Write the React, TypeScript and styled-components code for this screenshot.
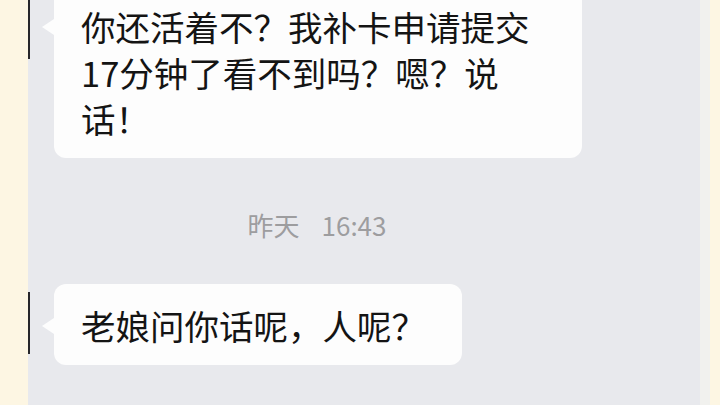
import React from "react";
import styled, { createGlobalStyle } from "styled-components";

const GlobalStyle = createGlobalStyle`
  html, body {
    margin: 0;
    padding: 0;
    background: #fdf6e3;
  }
  body {
    font-family: "Noto Sans CJK SC", "Noto Sans", sans-serif;
  }
`;

const Frame = styled.div`
  display: flex;
  width: 720px;
  height: 405px;
  overflow: hidden;
  background: #fdf6e3;
`;

const Margin = styled.div<{ $w: number }>`
  flex: 0 0 ${(p) => p.$w}px;
  background: #fdf6e3;
`;

const Edge = styled.div`
  flex: 0 0 10px;
  background: #f1f1ee;
`;

const ChatPanel = styled.div`
  flex: 1;
  background: #e8e9ed;
  display: flex;
  flex-direction: column;
  overflow: hidden;
`;

const MessageRow = styled.div<{ $offset?: number }>`
  display: flex;
  align-items: flex-start;
  gap: 24px;
  margin-top: ${(p) => p.$offset ?? 0}px;
`;

const Avatar = styled.div<{ $top?: number }>`
  flex: 0 0 2px;
  height: 62px;
  margin-top: ${(p) => p.$top ?? 8}px;
  background: #26262a;
`;

const Bubble = styled.div`
  position: relative;
  max-width: 528px;
  box-sizing: border-box;
  padding: 18px 36px 17px 27px;
  background: #fdfdfd;
  border-radius: 12px;
  color: #141414;
  font-size: 34.5px;
  line-height: 46px;

  &::before {
    content: "";
    position: absolute;
    left: -12px;
    top: 34px;
    border-right: 12px solid #fdfdfd;
    border-top: 8px solid transparent;
    border-bottom: 8px solid transparent;
  }
`;

const TimeRow = styled.div`
  display: flex;
  justify-content: center;
  gap: 22px;
  padding-right: 94px;
  margin: 52px 0 44px;
  color: #9d9d9f;
  font-size: 26px;
  line-height: 30px;
`;

export default function App() {
  return (
    <>
      <GlobalStyle />
      <Frame>
        <Margin $w={28} />
        <ChatPanel>
          <MessageRow $offset={-15}>
            <Avatar $top={12} />
            <Bubble>你还活着不？我补卡申请提交17分钟了看不到吗？嗯？说话！</Bubble>
          </MessageRow>
          <TimeRow>
            <span>昨天</span>
            <span>16:43</span>
          </TimeRow>
          <MessageRow>
            <Avatar />
            <Bubble>老娘问你话呢，人呢？</Bubble>
          </MessageRow>
        </ChatPanel>
        <Edge />
        <Margin $w={10} />
      </Frame>
    </>
  );
}
